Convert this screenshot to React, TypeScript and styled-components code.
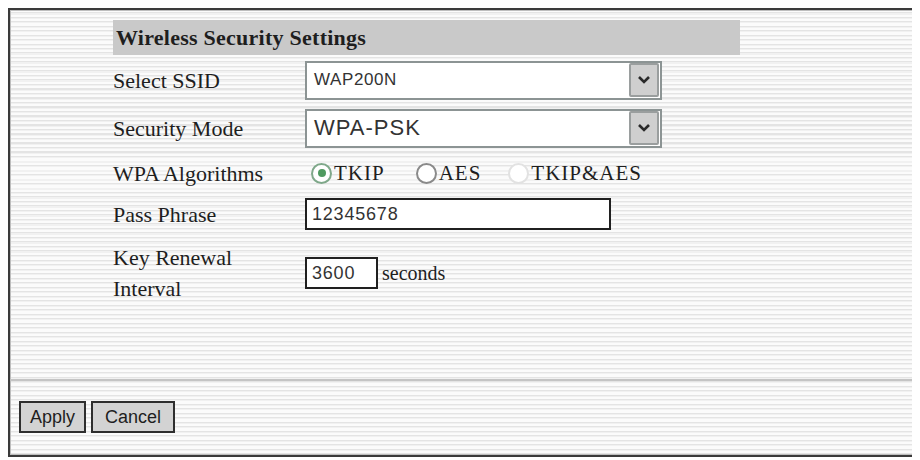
import React from 'react';
import styled, { createGlobalStyle } from 'styled-components';

const GlobalStyle = createGlobalStyle`
    body {
        margin: 8px;
        background: #ffffff;
        font-family: 'Liberation Serif', 'Times New Roman', serif;
        color: #1e1e1e;
    }
`;

const Frame = styled.div`
    box-sizing: border-box;
    width: 907px;
    height: 449px;
    display: flex;
    flex-direction: column;
    border: 2px solid #3a3a3a;
    box-shadow: inset 0 0 0 1px #bdbdbd;
    background: repeating-linear-gradient(
        180deg,
        #fbfbfb 0px,
        #fbfbfb 2px,
        #e4e4e4 2px,
        #e4e4e4 3px,
        #f1f1f1 3px,
        #f1f1f1 4.5px
    );
`;

const Content = styled.div`
    display: flex;
    flex-direction: column;
    padding: 10px 0 0 103px;
`;

const SectionHeader = styled.div`
    box-sizing: border-box;
    width: 627px;
    height: 35px;
    display: flex;
    align-items: center;
    padding-left: 3px;
    background: #c9c9c9;
    font-size: 22px;
    font-weight: bold;
    letter-spacing: 0.25px;
`;

const Row = styled.div<{ $height: number }>`
    display: flex;
    align-items: center;
    height: ${p => p.$height}px;
`;

const Label = styled.div`
    width: 192px;
    font-size: 22px;
    line-height: 31px;
`;

const Control = styled.div`
    display: flex;
    align-items: center;
`;

const SelectBox = styled.div<{ $size: number; $spacing: number }>`
    box-sizing: border-box;
    width: 357px;
    height: 39px;
    display: flex;
    align-items: center;
    justify-content: space-between;
    padding: 0 1px 0 7px;
    background: #ffffff;
    border: 2px solid #8c9494;
    font-family: 'Liberation Sans', Arial, sans-serif;
    font-size: ${p => p.$size}px;
    letter-spacing: ${p => p.$spacing}px;
    color: #333333;
`;

const DropButton = styled.div`
    box-sizing: border-box;
    width: 30px;
    height: 34px;
    display: flex;
    align-items: center;
    justify-content: center;
    background: #cfcfcf;
    border: 2px solid #9a9e9e;
    border-radius: 2px;
`;

const TextBox = styled.div<{ $width: number }>`
    box-sizing: border-box;
    width: ${p => p.$width}px;
    height: 32px;
    display: flex;
    align-items: center;
    padding-left: 5px;
    background: #ffffff;
    border: 2px solid #202020;
    font-family: 'Liberation Sans', Arial, sans-serif;
    font-size: 18px;
    letter-spacing: 0.8px;
    color: #333333;
`;

const Unit = styled.span`
    margin-left: 4px;
    font-size: 20px;
`;

const RadioGroup = styled.div`
    display: flex;
    align-items: center;
    padding-left: 6px;
`;

const RadioOption = styled.label<{ $gap: number }>`
    display: flex;
    align-items: center;
    margin-right: ${p => p.$gap}px;
    font-size: 21px;
    letter-spacing: 1px;
`;

const RadioDot = styled.span<{ $state: 'on' | 'off' | 'faint' }>`
    box-sizing: border-box;
    width: 21px;
    height: 21px;
    margin-right: 2px;
    display: flex;
    align-items: center;
    justify-content: center;
    border-radius: 50%;
    background: #ffffff;
    border: 2px solid
        ${p => (p.$state === 'on' ? '#7fa88a' : p.$state === 'off' ? '#8a8a8a' : '#e2e2e2')};

    &::after {
        content: '';
        width: 8px;
        height: 8px;
        border-radius: 50%;
        background: ${p => (p.$state === 'on' ? '#4f9a60' : 'transparent')};
    }
`;

const Footer = styled.div`
    margin-top: auto;
    display: flex;
    flex-direction: column;
`;

const Divider = styled.div`
    height: 2px;
    background: #c4c4c4;
`;

const ButtonBar = styled.div`
    display: flex;
    gap: 5px;
    padding: 20px 0 22px 9px;
`;

const Button = styled.button<{ $width: number }>`
    box-sizing: border-box;
    width: ${p => p.$width}px;
    height: 32px;
    padding: 0;
    background: #d3d3d3;
    border: 2px solid #2e2e2e;
    font-family: 'Liberation Sans', Arial, sans-serif;
    font-size: 18px;
    color: #1e1e1e;
`;

const Chevron = () => (
    <svg width="14" height="10" viewBox="0 0 14 10">
        <path d="M2 2 L7 7 L12 2" fill="none" stroke="#2a2a2a" strokeWidth="2.6" />
    </svg>
);

export default function App() {
    return (
        <>
            <GlobalStyle />
            <Frame>
                <Content>
                    <SectionHeader>Wireless Security Settings</SectionHeader>
                    <Row $height={50}>
                        <Label>Select SSID</Label>
                        <Control>
                            <SelectBox $size={17} $spacing={0.6}>
                                WAP200N
                                <DropButton>
                                    <Chevron />
                                </DropButton>
                            </SelectBox>
                        </Control>
                    </Row>
                    <Row $height={46}>
                        <Label>Security Mode</Label>
                        <Control>
                            <SelectBox $size={22} $spacing={1}>
                                WPA-PSK
                                <DropButton>
                                    <Chevron />
                                </DropButton>
                            </SelectBox>
                        </Control>
                    </Row>
                    <Row $height={44}>
                        <Label>WPA Algorithms</Label>
                        <RadioGroup>
                            <RadioOption $gap={31}>
                                <RadioDot $state="on" />
                                TKIP
                            </RadioOption>
                            <RadioOption $gap={27}>
                                <RadioDot $state="off" />
                                AES
                            </RadioOption>
                            <RadioOption $gap={0}>
                                <RadioDot $state="faint" />
                                TKIP&amp;AES
                            </RadioOption>
                        </RadioGroup>
                    </Row>
                    <Row $height={38}>
                        <Label>Pass Phrase</Label>
                        <TextBox $width={306}>12345678</TextBox>
                    </Row>
                    <Row $height={80}>
                        <Label>
                            Key Renewal
                            <br />
                            Interval
                        </Label>
                        <Control>
                            <TextBox $width={73}>3600</TextBox>
                            <Unit>seconds</Unit>
                        </Control>
                    </Row>
                </Content>
                <Footer>
                    <Divider />
                    <ButtonBar>
                        <Button $width={67}>Apply</Button>
                        <Button $width={84}>Cancel</Button>
                    </ButtonBar>
                </Footer>
            </Frame>
        </>
    );
}
